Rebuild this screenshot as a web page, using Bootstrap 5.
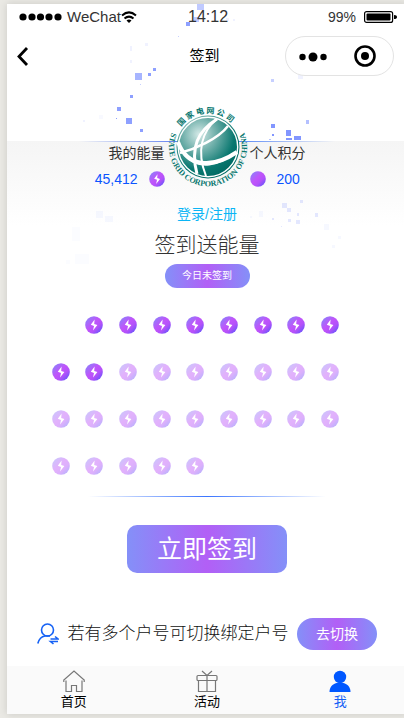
<!DOCTYPE html>
<html lang="zh-CN">
<head>
<meta charset="utf-8">
<meta name="viewport" content="width=device-width, initial-scale=1">
<title>签到</title>
<link href="https://cdn.jsdelivr.net/npm/bootstrap@5.3.0/dist/css/bootstrap.min.css" rel="stylesheet">
<style>
body{background:#eae9e4;font-family:"Liberation Sans","Noto Sans CJK SC",sans-serif;font-size:14px;line-height:20px;color:#333;overflow-x:hidden}
.phone{margin:4px -3px 4px 7px;background:#fff;box-shadow:0 0 8px #0002;isolation:isolate}
.status{height:26px;font-size:16px;line-height:26px;padding:0 10px 0 12px}
.status .carrier{font-size:15px}
.status .battery-text{font-size:14px}
.status .side{flex:1 1 0}
.topbar{height:52px;padding:0 13px 0 8px}
.topbar .side{flex:1 1 0}
.topbar h1{font-size:15px;line-height:20px;color:#000;font-weight:400}
.back{width:16px;height:28px}
.capsule{width:109px;height:40px;border:1px solid #e3e3e3;border-radius:20px;background:#fff;padding:0 17px 0 13px}
.decor{position:absolute;left:0;top:0;z-index:-1}
.balance{margin-top:59px;height:85px;background:linear-gradient(#f5f5f5,#fff);isolation:isolate}
.balance-line{height:1px;margin:0 72px;background:linear-gradient(90deg,#5b7df000,#5b7df0 40%,#4d80f5 60%,#4d80f500)}
.amount{font-size:14px;line-height:16px;color:#0b55ff;margin-top:8px;gap:11px}
.who{padding-top:1px}
.emblem{width:80px;height:84px;margin:-38px 2px 0 3px}
.login{color:#0bb5f5}
.heading{font-size:21px;line-height:30px;font-weight:300;margin-top:4px}
.grad{background:linear-gradient(90deg,#8490f8,#b25ff6 50%,#8490f8);color:#fff}
.grad:hover{color:#fff}
.today{width:85px;height:24px;font-size:10px;line-height:24px;margin-top:4px}
.days{display:grid;grid-template-columns:repeat(9,1fr);grid-auto-rows:47px;margin:13px 60px 0 37px;padding:0;list-style:none}
.days li{display:flex;align-items:center;justify-content:center}
.days li:first-child{grid-column-start:2}
.coin{width:18px;height:18px}
.later{opacity:.45}
.rule{height:1px;margin:7px 81px 28px;background:linear-gradient(90deg,#3b75ff00,#3b75ff 50%,#3b75ff00)}
.sign{width:160px;height:48px;border-radius:10px;font-size:25px;line-height:48px}
.switch-row{margin-top:45px;padding:0 30px 16px}
.switch-row p{font-size:17px;line-height:24px;font-weight:300;color:#111}
.go{width:80px;height:32px;font-size:14px;line-height:32px}
.tabs{background:#fafafa;height:48px}
.tabs a{color:#000;font-size:13px;line-height:18px;padding-top:4px}
.tabs a.current{color:#1460f5}
</style>
<script src="https://cdn.jsdelivr.net/npm/bootstrap@5.3.0/dist/js/bootstrap.bundle.min.js"></script>
</head>
<body>
<svg width="0" height="0" class="position-absolute" aria-hidden="true">
<defs>
<linearGradient id="cg" x1="0" y1="0" x2="1" y2="1"><stop offset=".08" stop-color="#8c80fa"/><stop offset=".45" stop-color="#c054fa"/><stop offset=".65" stop-color="#b451fa"/><stop offset=".95" stop-color="#5a55fb"/></linearGradient>
</defs>
<symbol id="coin" viewBox="0 0 18 18"><circle cx="9" cy="9" r="8.8" fill="url(#cg)"/><path d="M9.600 3.600 5.800 8.700l3.200 1.200-1 4.600 4.400-5.400-3.200-1.200z" fill="#fff"/></symbol>
<symbol id="disc" viewBox="0 0 18 18"><circle cx="9" cy="9" r="8.800" fill="url(#cg)"/></symbol>
</svg>
<div class="phone position-relative">
<svg class="decor" width="397" height="290" viewBox="7 4 397 290" aria-hidden="true">
<g fill="#8296ff">
<path opacity=".5" d="M197 4h7v6h-7zM194 17h5v5h-5z"/><path opacity=".7" d="M135 73h7v7h-7z"/><path opacity=".9" d="M186 22h4v4h-4zM153 68h3v3h-3zM148 73h3v3h-3zM130 95h3v3h-3zM117 107h4v4h-4zM126 118h6v6h-6zM140 129h3v3h-3zM116 118h1v1h-1z"/>
<path opacity=".12" d="M130 46h2v5h-2zM145 43h3v3h-3zM130 60h2v3h-2zM226 18h3v3h-3zM233 19h2v2h-2zM83 120h2v2h-2zM298 75h5v4h-5z"/>
<path opacity=".06" d="M99 115h4v4h-4z"/>
<path opacity=".03" d="M72 227h8v14h-8zM66 260h4v4h-4zM75 254h14v10h-14z"/>
<path opacity=".45" d="M271 79h3v3h-3zM178 36h1v1h-1zM140 84h1v1h-1z"/>
<path d="M271 124h4v4h-4zM286 130h5v6h-5zM294 136h7v4h-7zM286 138h6v2h-6zM272 134h2v2h-2z"/><path opacity=".6" d="M306 120h3v4h-3zM269 139h2v1h-2z"/>
</g>
</svg>
<div class="status d-flex align-items-center">
<div class="side d-flex align-items-center">
<svg width="44" height="12" viewBox="0 0 44 12" aria-hidden="true"><g fill="#000"><circle cx="4" cy="6" r="3.600"/><circle cx="13" cy="6" r="3.600"/><circle cx="21.500" cy="6" r="3.600"/><circle cx="30" cy="6" r="3.600"/><circle cx="39" cy="6" r="3.600"/></g></svg>
<span class="ms-1 carrier">WeChat</span>
<svg width="16" height="14" viewBox="0 0 16 14" fill="none" stroke="#000" stroke-width="2" aria-hidden="true"><path d="M1 5.500Q8 -.8 15 5.500M3.500 8.500q4.500-3.800 9 0"/><path d="M5.500 10.500q2.500-2 5 0L8 13z" fill="#000" stroke="none"/></svg>
</div>
<span>14:12</span>
<div class="side d-flex align-items-center justify-content-end gap-2">
<span class="battery-text">99%</span>
<svg width="33" height="12" viewBox="0 0 33 12" aria-hidden="true"><rect x=".6" y=".6" width="28" height="10.800" rx="2" fill="none" stroke="#000" stroke-width="1.200"/><rect x="2.500" y="2.500" width="24" height="7" rx="1"/><path d="M30 4q3 0 3 2t-3 2z"/></svg>
</div>
</div>
<header class="topbar d-flex align-items-center">
<div class="side"><button class="btn border-0 p-0 back d-block" aria-label="返回"><svg class="d-block" width="14" height="20" viewBox="0 0 14 20" fill="none" stroke="#000" stroke-width="2.800"><path d="M12 2 4 10.500 12 19"/></svg></button></div>
<h1 class="m-0 pe-0">签到</h1>
<div class="side d-flex justify-content-end"><div class="capsule d-flex align-items-center justify-content-between">
<button class="btn border-0 p-0 lh-1" aria-label="更多"><svg width="28" height="10" viewBox="0 0 28 10"><circle cx="3.500" cy="5" r="3.200"/><circle cx="14" cy="5" r="4.500"/><circle cx="24.500" cy="5" r="3.200"/></svg></button>
<button class="btn border-0 p-0 lh-1" aria-label="关闭"><svg width="22" height="22" viewBox="0 0 22 22"><circle cx="11" cy="11" r="9.500" fill="none" stroke="#000" stroke-width="2.600"/><circle cx="11" cy="11" r="4"/></svg></button>
</div></div>
</header>
<section class="balance position-relative">
<svg class="decor" width="397" height="120" viewBox="7 141 397 120" aria-hidden="true"><g fill="#8296ff"><path opacity=".22" d="M282 203h5v5h-5zM287 208h4v4h-4zM315 213h3v4h-3zM288 219h3v3h-3zM296 220h4v4h-4zM272 218h2v2h-2zM300 200h3v3h-3zM297 213h2v3h-2zM281 226h1v1h-1z"/><path opacity=".07" d="M324 224h5v6h-5zM338 236h3v3h-3zM332 245h3v3h-3zM259 211h4v6h-4zM250 216h2v2h-2zM96 211h7v7h-7zM105 216h8v6h-8z"/></g></svg>
<div class="balance-line"></div>
<div class="d-flex justify-content-center">
<div class="col who text-end"><div>我的能量</div><div class="amount d-flex justify-content-end align-items-center"><span>45,412</span><svg width="16" height="16"><use href="#coin"/></svg></div></div>
<svg class="emblem flex-shrink-0" viewBox="0 0 80 84" role="img" aria-label="国家电网公司">
<defs><radialGradient id="globe" cx=".36" cy=".3" r=".7"><stop stop-color="#d5eae8"/><stop offset=".35" stop-color="#78b4af"/><stop offset=".8" stop-color="#08776f"/><stop offset="1" stop-color="#006b64"/></radialGradient>
<path id="arcTop" d="M9.500 29A33.500 33.500 0 0 1 70.500 29"/><path id="arcBottom" d="M4.500 27A39 39 0 1 0 75.500 27"/></defs>
<circle cx="40" cy="43" r="31.500" fill="url(#globe)"/>
<g fill="none" stroke="#fff"><circle cx="40" cy="43" r="29.700" stroke-width="1.400"/><path d="M10 38C19 63 44 65 69 48" stroke-width="4"/><path d="M16 51C30 67 52 62 68 48" stroke-width="1.500"/><path d="M49 15C30 27 22 43 29 70" stroke-width="3"/><path d="M49 15C34 27 28 47 38 72" stroke-width="2"/><path d="M12 49C27 45 50 35 60 22" stroke-width="2.500"/></g>
<g fill="#08776f" font-weight="700"><text font-family="Noto Sans CJK SC, sans-serif" font-size="8"><textPath href="#arcTop" startOffset="7">国 家 电 网 公 司</textPath></text>
<text font-family="Liberation Serif, serif" font-size="8"><textPath href="#arcBottom" startOffset="50%" text-anchor="middle">STATE GRID CORPORATION OF CHINA</textPath></text></g>
</svg>
<div class="col who"><div>个人积分</div><div class="amount d-flex align-items-center"><svg width="16" height="16"><use href="#disc"/></svg><span>200</span></div></div>
</div>
<div class="text-center pt-3"><a href="#login" class="login text-decoration-none">登录/注册</a></div>
</section>
<main>
<h2 class="heading text-center mb-0">签到送能量</h2>
<div class="today grad rounded-pill mx-auto text-center">今日未签到</div>
<ul class="days">
<li><svg class="coin"><use href="#coin"/></svg></li><li><svg class="coin"><use href="#coin"/></svg></li><li><svg class="coin"><use href="#coin"/></svg></li><li><svg class="coin"><use href="#coin"/></svg></li><li><svg class="coin"><use href="#coin"/></svg></li><li><svg class="coin"><use href="#coin"/></svg></li><li><svg class="coin"><use href="#coin"/></svg></li><li><svg class="coin"><use href="#coin"/></svg></li>
<li><svg class="coin"><use href="#coin"/></svg></li><li><svg class="coin"><use href="#coin"/></svg></li><li><svg class="coin later"><use href="#coin"/></svg></li><li><svg class="coin later"><use href="#coin"/></svg></li><li><svg class="coin later"><use href="#coin"/></svg></li><li><svg class="coin later"><use href="#coin"/></svg></li><li><svg class="coin later"><use href="#coin"/></svg></li><li><svg class="coin later"><use href="#coin"/></svg></li><li><svg class="coin later"><use href="#coin"/></svg></li>
<li><svg class="coin later"><use href="#coin"/></svg></li><li><svg class="coin later"><use href="#coin"/></svg></li><li><svg class="coin later"><use href="#coin"/></svg></li><li><svg class="coin later"><use href="#coin"/></svg></li><li><svg class="coin later"><use href="#coin"/></svg></li><li><svg class="coin later"><use href="#coin"/></svg></li><li><svg class="coin later"><use href="#coin"/></svg></li><li><svg class="coin later"><use href="#coin"/></svg></li><li><svg class="coin later"><use href="#coin"/></svg></li>
<li><svg class="coin later"><use href="#coin"/></svg></li><li><svg class="coin later"><use href="#coin"/></svg></li><li><svg class="coin later"><use href="#coin"/></svg></li><li><svg class="coin later"><use href="#coin"/></svg></li><li><svg class="coin later"><use href="#coin"/></svg></li>
</ul>
<div class="rule"></div>
<button class="btn border-0 p-0 grad sign d-block mx-auto">立即签到</button>
<div class="switch-row d-flex align-items-center justify-content-between">
<svg width="22" height="22" viewBox="0 0 22 22" fill="none" stroke="#1662f5" stroke-width="1.600" aria-hidden="true"><circle cx="10.500" cy="7" r="6"/><path d="M.8 20.500C2 16 4.500 13.500 8 13h5M13.500 16H21l-3-2.500M21 18.500h-7.500l3 2.500"/></svg>
<p class="m-0 text-nowrap">若有多个户号可切换绑定户号</p>
<button class="btn border-0 p-0 grad rounded-pill go">去切换</button>
</div>
</main>
<nav class="tabs d-flex text-center">
<a href="#home" class="col d-flex flex-column align-items-center text-decoration-none"><svg width="22" height="23" viewBox="0 0 22 23" fill="none" stroke="#777" stroke-width="1.200"><path d="M3 10.500v11h5.500v-6h5v6H19v-11M.8 12v-2L11 1l10.200 9v2"/></svg><span>首页</span></a>
<a href="#events" class="col d-flex flex-column align-items-center text-decoration-none"><svg width="22" height="23" viewBox="0 0 22 23" fill="none" stroke="#777" stroke-width="1.200"><rect x="1" y="5.500" width="20" height="5" rx="1"/><path d="M2.500 10.500v11h17v-11M11 5.500v16M6 1l5 4.500L16 1"/></svg><span>活动</span></a>
<a href="#me" class="col d-flex flex-column align-items-center text-decoration-none current" aria-current="page"><svg width="22" height="23" viewBox="0 0 22 23" fill="#0057ff"><circle cx="11" cy="7" r="6.200"/><path d="M.5 22c0-5 3-8 7-9h7c4 1 7 4 7 9z"/></svg><span>我</span></a>
</nav>
</div>
</body>
</html>
